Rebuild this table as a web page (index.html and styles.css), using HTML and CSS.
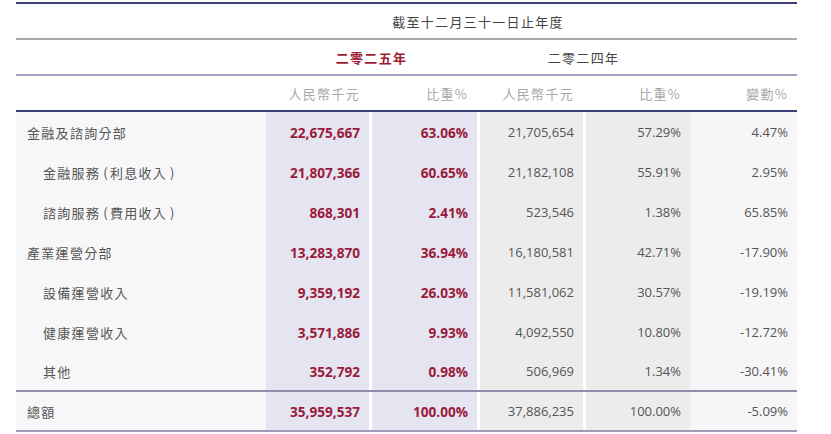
FILE: index.html
```html
<!DOCTYPE html>
<html lang="zh-Hant">
<head>
<meta charset="utf-8">
<link rel="stylesheet" href="styles.css">
</head>
<body>
<div class="wrap">
<table class="fin">
  <colgroup>
    <col class="c-label"><col class="c1"><col class="c2"><col class="c3"><col class="c4"><col class="c5">
  </colgroup>
  <thead>
    <tr class="h-title">
      <th></th>
      <th colspan="4" class="center">截至十二月三十一日止年度</th>
      <th></th>
    </tr>
    <tr class="h-year">
      <th></th>
      <th colspan="2" class="center y-cur">二零二五年</th>
      <th colspan="2" class="center y-prev">二零二四年</th>
      <th></th>
    </tr>
    <tr class="h-unit">
      <th></th>
      <th>人民幣千元</th>
      <th>比重%</th>
      <th>人民幣千元</th>
      <th>比重%</th>
      <th>變動%</th>
    </tr>
  </thead>
  <tbody>
    <tr><td class="lbl">金融及諮詢分部</td><td class="cur">22,675,667</td><td class="cur g">63.06%</td><td class="prev g">21,705,654</td><td class="prev g">57.29%</td><td class="chg">4.47%</td></tr>
    <tr><td class="lbl sub">金融服務<span class="par">(</span>利息收入<span class="par">)</span></td><td class="cur">21,807,366</td><td class="cur g">60.65%</td><td class="prev g">21,182,108</td><td class="prev g">55.91%</td><td class="chg">2.95%</td></tr>
    <tr><td class="lbl sub">諮詢服務<span class="par">(</span>費用收入<span class="par">)</span></td><td class="cur">868,301</td><td class="cur g">2.41%</td><td class="prev g">523,546</td><td class="prev g">1.38%</td><td class="chg">65.85%</td></tr>
    <tr><td class="lbl">產業運營分部</td><td class="cur">13,283,870</td><td class="cur g">36.94%</td><td class="prev g">16,180,581</td><td class="prev g">42.71%</td><td class="chg">-17.90%</td></tr>
    <tr><td class="lbl sub">設備運營收入</td><td class="cur">9,359,192</td><td class="cur g">26.03%</td><td class="prev g">11,581,062</td><td class="prev g">30.57%</td><td class="chg">-19.19%</td></tr>
    <tr><td class="lbl sub">健康運營收入</td><td class="cur">3,571,886</td><td class="cur g">9.93%</td><td class="prev g">4,092,550</td><td class="prev g">10.80%</td><td class="chg">-12.72%</td></tr>
    <tr class="last"><td class="lbl sub">其他</td><td class="cur">352,792</td><td class="cur g">0.98%</td><td class="prev g">506,969</td><td class="prev g">1.34%</td><td class="chg">-30.41%</td></tr>
    <tr class="total"><td class="lbl">總額</td><td class="cur">35,959,537</td><td class="cur g">100.00%</td><td class="prev g">37,886,235</td><td class="prev g">100.00%</td><td class="chg">-5.09%</td></tr>
  </tbody>
</table>
</div>
</body>
</html>
```

FILE: styles.css
```css
html, body {
  margin: 0;
  padding: 0;
  background: #ffffff;
}
.wrap {
  padding: 2px 34px 0 16px;
}
.fin {
  width: 781px;
  table-layout: fixed;
  border-collapse: separate;
  border-spacing: 0;
  border-top: 2px solid #3c3f7c;
  font-family: "Open Sans", "Noto Sans CJK TC", sans-serif;
  font-size: 13px;
  color: #555555;
}
.c-label { width: 250px; }
.c1 { width: 103px; }
.c2 { width: 108px; }
.c3 { width: 106px; }
.c4 { width: 107px; }
.c5 { width: 107px; }

.fin th, .fin td {
  padding: 0 9px 0 0;
  text-align: right;
  font-weight: 400;
  white-space: nowrap;
}
.fin th.center {
  text-align: center;
  padding: 0;
}
.fin thead th {
  font-family: "Noto Sans CJK TC", sans-serif;
  letter-spacing: 1.3px;
}
.h-title th {
  height: 34px;
  color: #444444;
  border-bottom: 2px solid #a9a9af;
}
.h-year th {
  height: 34px;
  color: #444444;
  border-bottom: 2px solid #a2a2c0;
}
.h-year th.y-cur {
  color: #a01a36;
  font-weight: 700;
}
.h-unit th {
  height: 34px;
  color: #a8a8a8;
  border-bottom: 2px solid #3c3f7c;
}
.fin tbody td {
  height: 40px;
}
.fin td.lbl {
  text-align: left;
  padding-left: 11px;
  font-family: "Noto Sans CJK TC", sans-serif;
  letter-spacing: 1.3px;
  background: #f7f7f9;
  color: #555555;
}
.fin td.lbl.sub {
  padding-left: 27px;
}
.par {
  display: inline-block;
  padding: 0 1px 0 3px;
}
.fin td.cur {
  background: #e5e5f1;
  color: #9b1a3a;
  font-weight: 700;
  font-size: 13.6px;
}
.fin td.prev {
  background: #ececec;
  color: #555555;
}
.fin td.g {
  box-shadow: inset 3px 0 0 #ffffff;
}
.fin td.chg {
  background: #f6f6f8;
  color: #555555;
}
.fin tr.last td {
  height: 38px;
  border-bottom: 2px solid #8f8fac;
}
.fin tr.total td {
  height: 38px;
  border-bottom: 2px solid #9c9cb6;
}
```
